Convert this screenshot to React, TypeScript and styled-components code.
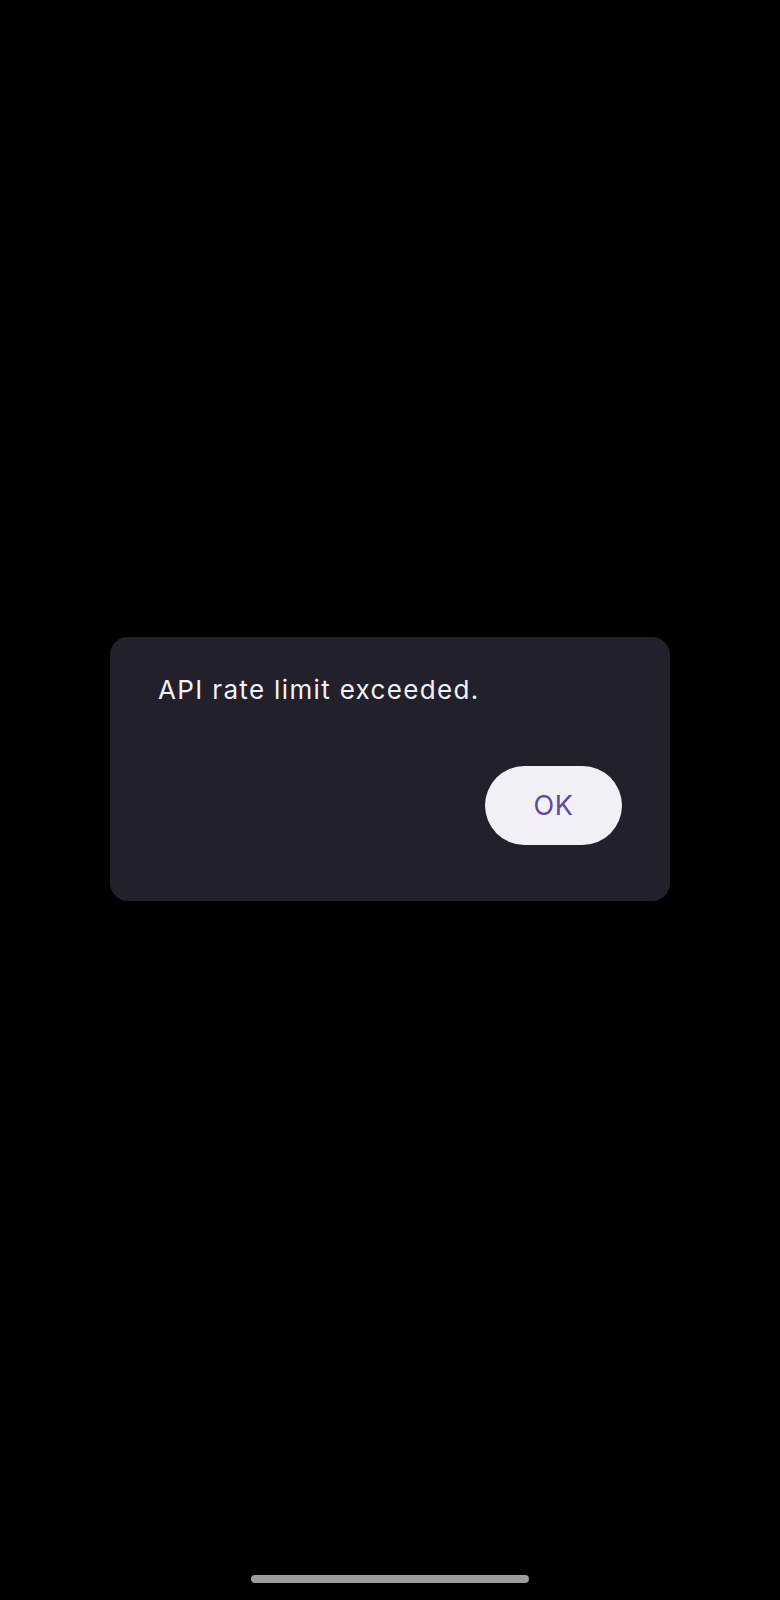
import styled, { createGlobalStyle } from "styled-components";

const GlobalStyle = createGlobalStyle`
  html, body {
    margin: 0;
    padding: 0;
    background: #000000;
  }
  body {
    font-family: Inter, Roboto, "Liberation Sans", sans-serif;
  }
`;

const Screen = styled.div`
  width: 780px;
  height: 1600px;
  display: flex;
  flex-direction: column;
  background: #000000;
`;

const Overlay = styled.div`
  flex: 1;
  display: flex;
  align-items: center;
  justify-content: center;
  padding-bottom: 38px;
`;

const Dialog = styled.div`
  width: 560px;
  box-sizing: border-box;
  padding: 38px 48px 56px 48px;
  background: #22212b;
  border-radius: 18px;
  display: flex;
  flex-direction: column;
`;

const Message = styled.p`
  margin: 0;
  font-size: 26px;
  line-height: 30px;
  color: #f1f0f4;
  letter-spacing: 1.35px;
`;

const Actions = styled.div`
  display: flex;
  justify-content: flex-end;
  margin-top: 61px;
`;

const Button = styled.button`
  width: 137px;
  height: 79px;
  border: none;
  border-radius: 40px;
  background: #f3eff7;
  color: #5d4b9c;
  font-family: Inter, Roboto, "Liberation Sans", sans-serif;
  font-size: 27px;
  letter-spacing: 0.5px;
  cursor: pointer;
`;

const HomeArea = styled.div`
  display: flex;
  justify-content: center;
  padding-bottom: 17px;
`;

const HomeIndicator = styled.div`
  width: 278px;
  height: 8px;
  border-radius: 4px;
  background: #9b9b9b;
`;

const App = () => {
  return (
    <>
      <GlobalStyle />
      <Screen>
        <Overlay>
          <Dialog role="alertdialog">
            <Message>API rate limit exceeded.</Message>
            <Actions>
              <Button>OK</Button>
            </Actions>
          </Dialog>
        </Overlay>
        <HomeArea>
          <HomeIndicator />
        </HomeArea>
      </Screen>
    </>
  );
};

export default App;
